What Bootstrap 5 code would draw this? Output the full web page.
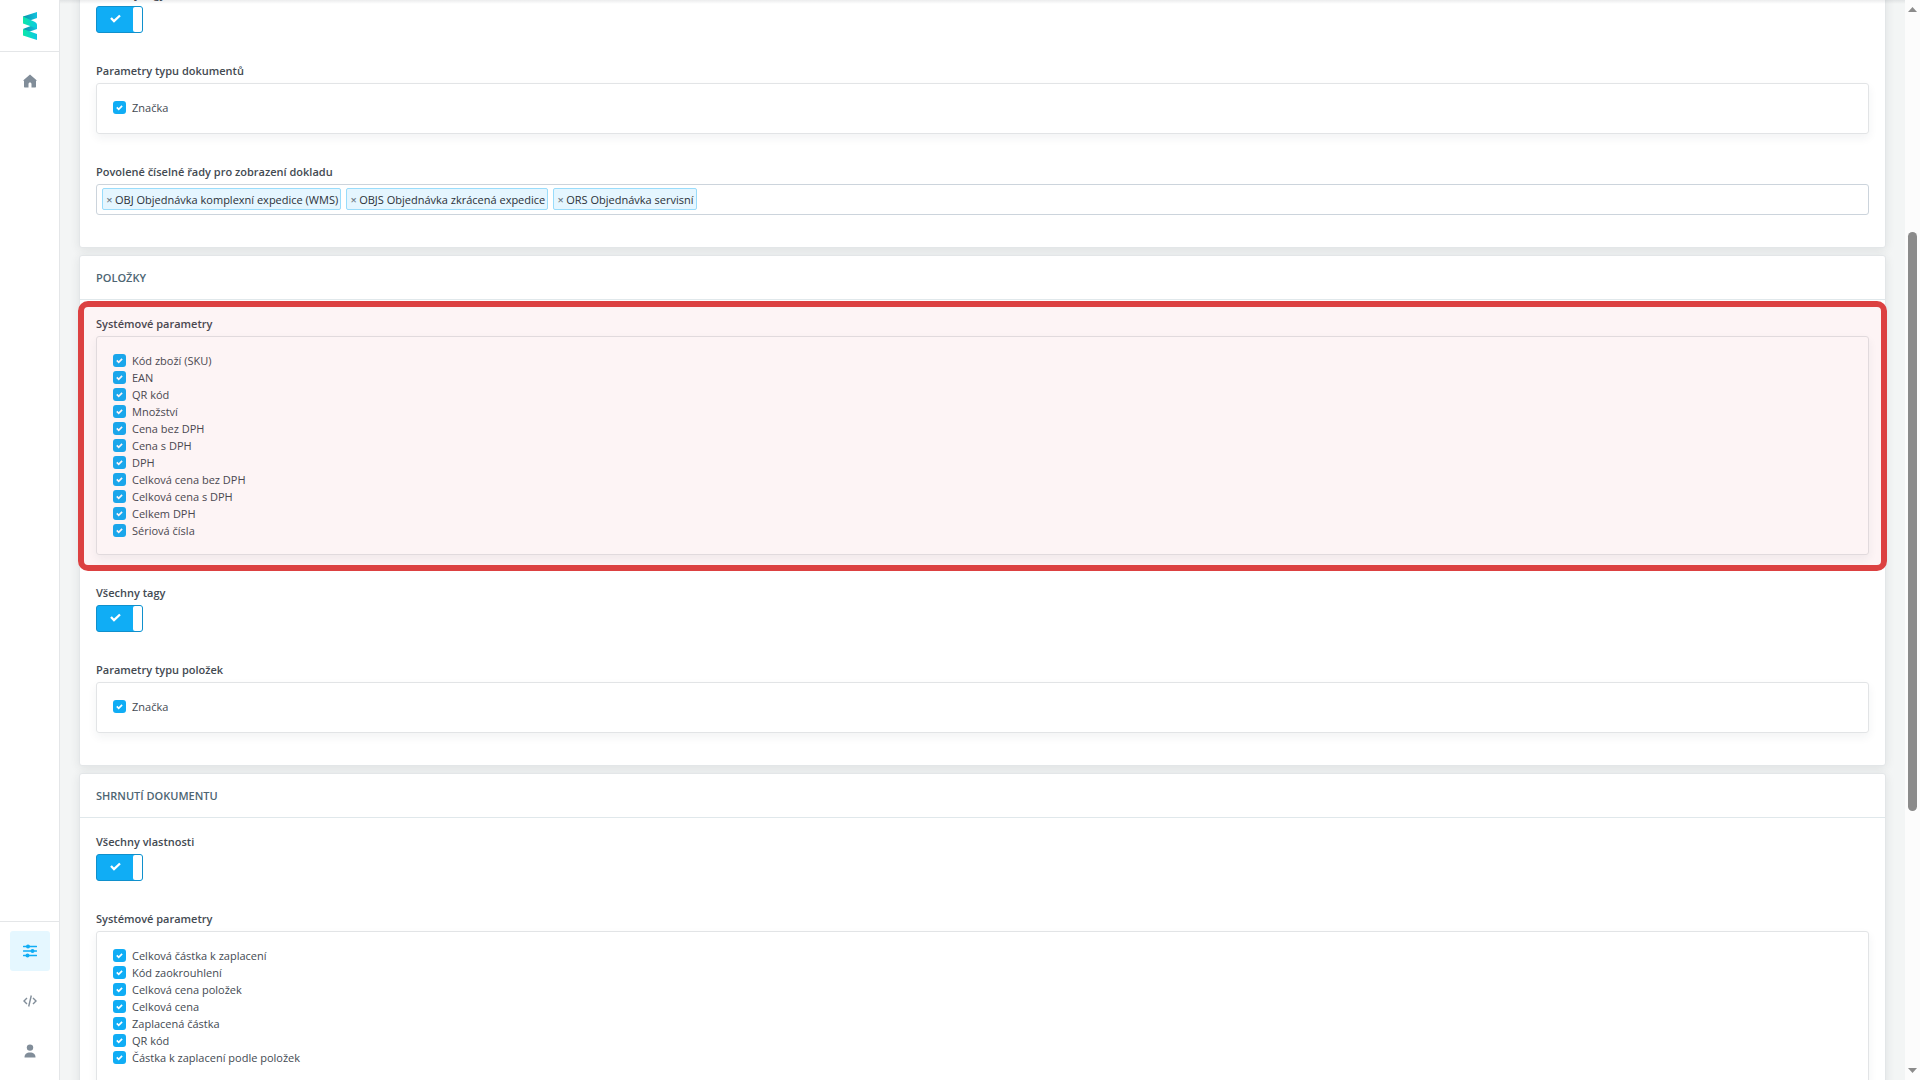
<!DOCTYPE html>
<html lang="cs">
<head>
<meta charset="utf-8">
<meta name="viewport" content="width=device-width, initial-scale=1">
<title>Nastavení dokumentů</title>
<link href="https://cdn.jsdelivr.net/npm/bootstrap@5.3.0/dist/css/bootstrap.min.css" rel="stylesheet">
<style>
body { font: 400 11px/17px "Open Sans", "Noto Sans", sans-serif; color: #434a52; background: #f3f5f5; }
.rail { width: 60px; border-right: 1px solid #e4e6e8; }
.rail-logo { height: 52px; border-bottom: 1px solid #e4e6e8; }
.rail-link { width: 40px; height: 40px; color: #818d99; border-radius: 3px; }
.rail-link.active { color: #10adf5; background: #e5f7ff; }
.rail-top { padding-top: 9px; }
.rail-foot { border-top: 1px solid #e4e6e8; padding: 9px 0; gap: 10px; }
.content { padding: 0 19px; gap: 7px; }
.panel { border: 1px solid #e3e6e8; border-radius: 3px; box-shadow: 0 2px 10px rgba(40, 50, 60, .1); }
.panel-scrolled { margin-top: -31px; }
.panel-head { height: 44px; padding: 0 16px; border-bottom: 1px solid #e0e8eb; font-size: 11px; font-weight: 600; color: #4d6573; }
.panel-main { padding: 15px 16px 3px; }
.field { margin: 0 0 29px; min-width: 0; }
.field-label { display: block; float: none; margin: 0 0 4px; font-size: 11px; line-height: 17px; font-weight: 600; }
.field-box { border: 1px solid #e2e4e6; border-radius: 3px; padding: 15px 16px 17px; box-shadow: 0 4px 10px rgba(40, 50, 60, .06); }
.field-box.many { padding-bottom: 15px; }
.opt { display: flex; align-items: center; gap: 6px; height: 17px; }
.opt input { appearance: none; flex: none; width: 13px; height: 13px; margin: 0; border-radius: 3px; background: #10adf5 url("data:image/svg+xml,%3Csvg xmlns='http://www.w3.org/2000/svg' viewBox='0 0 13 13'%3E%3Cpath d='M3.8 6.4l1.9 1.9 3.4-3.4' fill='none' stroke='%23fff' stroke-width='1.7'/%3E%3C/svg%3E") center / 13px no-repeat; }
.toggle { appearance: none; display: block; width: 47px; height: 27px; margin: 0; border: 1px solid #1090cc; border-radius: 3px; background: #10adf5 url("data:image/svg+xml,%3Csvg xmlns='http://www.w3.org/2000/svg' viewBox='0 0 11 9'%3E%3Cpath d='M1 4l3 3.2 6-5.7' fill='none' stroke='%23fff' stroke-width='2.3'/%3E%3C/svg%3E") 13px 7px / 11px 9px no-repeat; position: relative; }
.toggle::after { content: ""; position: absolute; top: 0; right: 0; width: 9px; height: 100%; border-radius: 2px; background: #fff; }
.tagbox { border: 1px solid #ccd4dc; border-radius: 3px; height: 31px; padding: 0 5px 1px; gap: 5px; }
.tagitem { display: flex; align-items: center; gap: 2px; height: 22px; padding: 0 2px 0 3px; border: 1px solid #99dcfb; border-radius: 2px; background: #e5f6ff; color: #2b3138; white-space: nowrap; }
.tagitem button { border: 0; background: none; padding: 0; width: 7px; line-height: 17px; color: #6f7d88; font-size: 11px; font-weight: 600; }
.tagbox input { border: 0; outline: 0; min-width: 0; background: transparent; }
.marked { position: relative; margin-bottom: 29px; }
.marked .field { margin-bottom: 0; }
.marked::after { content: ""; position: absolute; inset: -14px -18px -16px; border: 6px solid #dc4141; border-radius: 10px; background: rgba(220, 30, 50, .05); pointer-events: none; }
.topshade { position: absolute; top: 0; left: 60px; right: 15px; height: 4px; background: linear-gradient(rgba(40, 50, 60, .09), rgba(40, 50, 60, 0)); }
.sbar { width: 15px; background: #fcfcfc; padding: 7px 3px; }
.sbar-track { flex: 1; padding-top: 220px; }
.sbar-thumb { width: 9px; border-radius: 5px; background: #8b8b8b; height: 579px; }
</style>
<script src="https://cdn.jsdelivr.net/npm/bootstrap@5.3.0/dist/js/bootstrap.bundle.min.js"></script>
</head>
<body class="d-flex vh-100 overflow-hidden">
<nav class="rail bg-white d-flex flex-column align-items-stretch flex-shrink-0" aria-label="Hlavní">
  <a href="#" class="rail-logo d-flex align-items-center justify-content-center" aria-label="Domů">
    <svg width="14" height="28" viewBox="0 0 14 28">
      <defs>
        <linearGradient id="dk" x1="0" x2="1"><stop offset="0" stop-color="#0b8fa8"/><stop offset="1" stop-color="#12c4e0"/></linearGradient>
        <linearGradient id="lt" x1="0" x2="1"><stop offset="0" stop-color="#0ce8a8"/><stop offset="1" stop-color="#0cc9e2"/></linearGradient>
      </defs>
      <path d="M0 4.500L14 0v6L4 9.500 0 7z" fill="url(#dk)"/><path d="M0 17L9 13.500l5 1V17L4 20.500z" fill="url(#dk)"/>
      <path d="M0 4.500l11 5c2 1 3 2 3 3.500v3.500L0 11.500z" fill="url(#lt)"/><path d="M0 17l14 5v6L0 23.500z" fill="url(#lt)"/>
    </svg>
  </a>
  <div class="rail-top">
    <a href="#" class="rail-link d-flex align-items-center justify-content-center mx-auto" aria-label="Přehled">
      <svg width="14" height="14" viewBox="0 0 14 14"><path fill="currentColor" d="M7 .5L.7 6c-.5.500-.2 1 .3 1v5.500c0 .6.4 1 1 1h3.500V10c0-.9.600-1.500 1.500-1.500s1.500.6 1.500 1.500v3.500H12c.6 0 1-.4 1-1V7c.5 0 .8-.5.3-1z"/></svg>
    </a>
  </div>
  <div class="rail-foot mt-auto d-flex flex-column align-items-center">
    <a href="#" class="rail-link active d-flex align-items-center justify-content-center" aria-label="Nastavení">
      <svg width="14" height="14" viewBox="0 0 14 14"><path d="M.5 2.500h13M.5 7h13M.5 11.500h13" stroke="currentColor" stroke-width="1.300" stroke-linecap="round"/><g fill="currentColor"><circle cx="5" cy="2.500" r="2"/><circle cx="9.500" cy="7" r="2"/><circle cx="4.500" cy="11.500" r="2"/></g></svg>
    </a>
    <a href="#" class="rail-link d-flex align-items-center justify-content-center" aria-label="API">
      <svg width="14" height="12" viewBox="0 0 14 12" fill="none" stroke="currentColor" stroke-width="1.400"><path d="M4 3L1 6l3 3M10 3l3 3-3 3M8.300.5l-2.600 11"/></svg>
    </a>
    <a href="#" class="rail-link d-flex align-items-center justify-content-center" aria-label="Profil">
      <svg width="12" height="14" viewBox="0 0 12 14" fill="currentColor"><circle cx="6" cy="3.600" r="3.200"/><path d="M.5 13.500c0-3.500 2-5 5.500-5s5.500 1.500 5.500 5z"/></svg>
    </a>
  </div>
</nav>
<main class="content flex-grow-1 d-flex flex-column overflow-hidden">
  <section class="panel panel-scrolled bg-white flex-shrink-0">
    <div class="panel-main">
      <div class="field"><label class="field-label" for="t1">Všechny tagy</label><input class="toggle" type="checkbox" id="t1" checked></div>
      <fieldset class="field"><legend class="field-label">Parametry typu dokumentů</legend>
        <div class="field-box"><label class="opt"><input type="checkbox" checked>Značka</label></div>
      </fieldset>
      <div class="field"><label class="field-label" for="rady">Povolené číselné řady pro zobrazení dokladu</label>
        <div class="tagbox d-flex align-items-center bg-white">
          <span class="tagitem"><button type="button" aria-label="Odebrat OBJ">×</button>OBJ Objednávka komplexní expedice (WMS)</span>
          <span class="tagitem"><button type="button" aria-label="Odebrat OBJS">×</button>OBJS Objednávka zkrácená expedice</span>
          <span class="tagitem"><button type="button" aria-label="Odebrat ORS">×</button>ORS Objednávka servisní</span>
          <input class="flex-grow-1" type="text" id="rady">
        </div>
      </div>
    </div>
  </section>
  <section class="panel bg-white flex-shrink-0">
    <h2 class="panel-head d-flex align-items-center m-0">POLOŽKY</h2>
    <div class="panel-main">
      <div class="marked">
        <fieldset class="field"><legend class="field-label">Systémové parametry</legend>
          <div class="field-box many">
            <label class="opt"><input type="checkbox" checked>Kód zboží (SKU)</label>
            <label class="opt"><input type="checkbox" checked>EAN</label>
            <label class="opt"><input type="checkbox" checked>QR kód</label>
            <label class="opt"><input type="checkbox" checked>Množství</label>
            <label class="opt"><input type="checkbox" checked>Cena bez DPH</label>
            <label class="opt"><input type="checkbox" checked>Cena s DPH</label>
            <label class="opt"><input type="checkbox" checked>DPH</label>
            <label class="opt"><input type="checkbox" checked>Celková cena bez DPH</label>
            <label class="opt"><input type="checkbox" checked>Celková cena s DPH</label>
            <label class="opt"><input type="checkbox" checked>Celkem DPH</label>
            <label class="opt"><input type="checkbox" checked>Sériová čísla</label>
          </div>
        </fieldset>
      </div>
      <div class="field"><label class="field-label" for="t2">Všechny tagy</label><input class="toggle" type="checkbox" id="t2" checked></div>
      <fieldset class="field"><legend class="field-label">Parametry typu položek</legend>
        <div class="field-box"><label class="opt"><input type="checkbox" checked>Značka</label></div>
      </fieldset>
    </div>
  </section>
  <section class="panel bg-white flex-shrink-0">
    <h2 class="panel-head d-flex align-items-center m-0">SHRNUTÍ DOKUMENTU</h2>
    <div class="panel-main">
      <div class="field"><label class="field-label" for="t3">Všechny vlastnosti</label><input class="toggle" type="checkbox" id="t3" checked></div>
      <fieldset class="field"><legend class="field-label">Systémové parametry</legend>
        <div class="field-box">
          <label class="opt"><input type="checkbox" checked>Celková částka k zaplacení</label>
          <label class="opt"><input type="checkbox" checked>Kód zaokrouhlení</label>
          <label class="opt"><input type="checkbox" checked>Celková cena položek</label>
          <label class="opt"><input type="checkbox" checked>Celková cena</label>
          <label class="opt"><input type="checkbox" checked>Zaplacená částka</label>
          <label class="opt"><input type="checkbox" checked>QR kód</label>
          <label class="opt"><input type="checkbox" checked>Částka k zaplacení podle položek</label>
        </div>
      </fieldset>
    </div>
  </section>
</main>
<div class="topshade"></div>
<div class="sbar d-flex flex-column flex-shrink-0" aria-hidden="true">
  <svg width="9" height="5" viewBox="0 0 9 5"><path d="M0 5L4.500 0 9 5z" fill="#8b8b8b"/></svg>
  <div class="sbar-track"><div class="sbar-thumb"></div></div>
  <svg width="9" height="5" viewBox="0 0 9 5"><path d="M0 0l4.500 5L9 0z" fill="#8b8b8b"/></svg>
</div>
</body>
</html>
